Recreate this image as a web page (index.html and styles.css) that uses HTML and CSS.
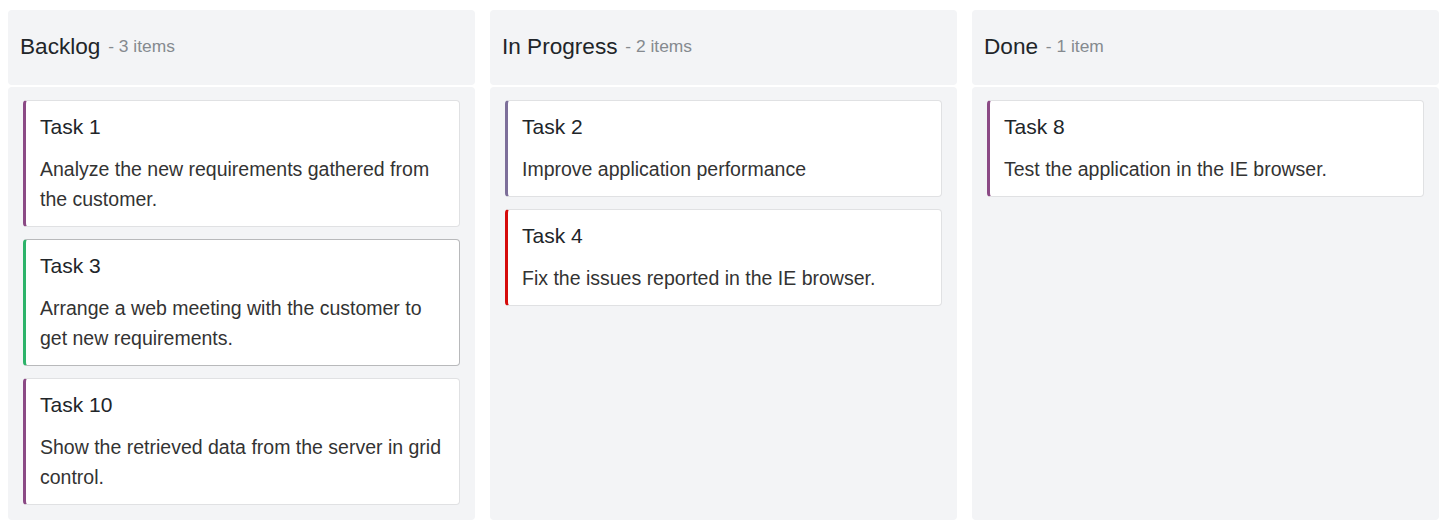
FILE: index.html
```html
<!DOCTYPE html>
<html>
<head>
<meta charset="utf-8">
<link rel="stylesheet" href="styles.css">
</head>
<body>
<div class="board">
  <div class="column">
    <div class="col-header"><span class="col-title">Backlog</span><span class="col-count"> - 3 items</span></div>
    <div class="col-body">
      <div class="card purple">
        <div class="card-title">Task 1</div>
        <div class="card-text">Analyze the new requirements gathered from the customer.</div>
      </div>
      <div class="card green selected">
        <div class="card-title">Task 3</div>
        <div class="card-text">Arrange a web meeting with the customer to get new requirements.</div>
      </div>
      <div class="card purple">
        <div class="card-title">Task 10</div>
        <div class="card-text">Show the retrieved data from the server in grid control.</div>
      </div>
    </div>
  </div>
  <div class="column">
    <div class="col-header"><span class="col-title">In Progress</span><span class="col-count"> - 2 items</span></div>
    <div class="col-body">
      <div class="card slate">
        <div class="card-title">Task 2</div>
        <div class="card-text">Improve application performance</div>
      </div>
      <div class="card red">
        <div class="card-title">Task 4</div>
        <div class="card-text">Fix the issues reported in the IE browser.</div>
      </div>
    </div>
  </div>
  <div class="column">
    <div class="col-header"><span class="col-title">Done</span><span class="col-count"> - 1 item</span></div>
    <div class="col-body">
      <div class="card purple">
        <div class="card-title">Task 8</div>
        <div class="card-text">Test the application in the IE browser.</div>
      </div>
    </div>
  </div>
</div>
</body>
</html>
```
FILE: styles.css
```css
html, body {
  margin: 0;
  padding: 0;
  background: #ffffff;
}
body {
  padding: 10px 9px 9px 8px;
  font-family: "Liberation Sans", Arial, sans-serif;
}
.board {
  display: grid;
  grid-template-columns: repeat(3, 1fr);
  column-gap: 15px;
  height: 510px;
}
.column {
  display: flex;
  flex-direction: column;
  gap: 2px;
}
.col-header {
  background: #f3f4f6;
  border-radius: 4px;
  height: 75px;
  box-sizing: border-box;
  padding: 0 12px 2px;
  display: flex;
  align-items: center;
}
.col-title {
  font-size: 22.6px;
  color: #212529;
}
.col-count {
  font-size: 17.4px;
  color: #858a8f;
  margin-left: 3px;
  white-space: pre;
}
.col-body {
  flex: 1;
  background: #f3f4f6;
  border-radius: 4px;
  padding: 13px 15px;
  display: flex;
  flex-direction: column;
  gap: 12px;
}
.card {
  background: #ffffff;
  border: 1px solid #e0e1e3;
  border-left: 3px solid #8b4a85;
  border-radius: 4px;
  padding: 13px 16px 12px 14px;
}
.card.selected {
  border-color: #b8b9bb;
  border-left-color: #2db36a;
}
.purple { border-left-color: #8b4a85; }
.slate { border-left-color: #7d6f9a; }
.green { border-left-color: #2db36a; }
.red { border-left-color: #d50b0b; }
.card-title {
  font-size: 21px;
  line-height: 26px;
  color: #212529;
}
.card-text {
  margin-top: 14px;
  font-size: 19.5px;
  line-height: 30px;
  color: #333333;
}
```
